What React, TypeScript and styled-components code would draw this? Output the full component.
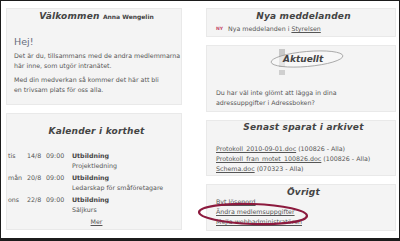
import styled, { createGlobalStyle } from "styled-components";

const Global = createGlobalStyle`
  html, body { margin: 0; padding: 0; background: #fff; }
  body { font-family: "DejaVu Sans", Verdana, sans-serif; color: #555; }
`;

const Frame = styled.div`
  width: 400px;
  height: 241px;
  box-sizing: border-box;
  border: 1px solid #1c1c1c;
  border-bottom-width: 3px;
  display: grid;
  grid-template-columns: 176px 190px;
  column-gap: 24px;
  align-items: start;
  padding: 7px 0 0 5px;
`;

const Column = styled.div`
  display: flex;
  flex-direction: column;
  gap: 8px;
`;

const Panel = styled.section<{ $h: number }>`
  position: relative;
  box-sizing: border-box;
  height: ${(p) => p.$h}px;
  background: #f4f4f4;
  border: 1px solid #e9e9e9;
  padding: 0 4px 0 9px;
  font-size: 6.3px;
  line-height: 10px;
  white-space: nowrap;
`;

const Title = styled.h2<{ $top?: number }>`
  margin: ${(p) => p.$top ?? 2}px 0 0;
  text-align: center;
  font-size: 9px;
  line-height: 12px;
  font-weight: bold;
  font-style: italic;
  color: #444;
  letter-spacing: 0.2px;
`;

const Who = styled.span`
  font-size: 6px;
  font-style: normal;
  letter-spacing: 0;
`;

const Hello = styled.div`
  margin: 13px 0 0 -2px;
  font-size: 9.5px;
  line-height: 12px;
  color: #676c7c;
`;

const Para = styled.p<{ $top: number }>`
  margin: ${(p) => p.$top}px 0 0 -2px;
`;

const CalTable = styled.table`
  margin: 14px 0 0 -8px;
  border-collapse: collapse;
  td {
    padding: 0;
    vertical-align: top;
  }
  td:nth-child(1) { width: 19px; }
  td:nth-child(2) { width: 19px; }
  td:nth-child(3) { width: 26px; }
  tr + tr td { padding-top: 2px; }
`;

const Strong = styled.b`
  color: #444;
`;

const More = styled.div`
  margin-top: 2px;
  text-align: center;
  a { color: #555; text-decoration: underline; }
`;

const Line = styled.div<{ $top?: number }>`
  margin-top: ${(p) => p.$top ?? 0}px;
  a { color: #555; text-decoration: underline; }
`;

const NewTag = styled.span`
  display: inline-block;
  width: 12px;
  font-size: 4.5px;
  font-weight: bold;
  color: #c44a6a;
  vertical-align: 1px;
`;

const Badge = styled.div`
  display: flex;
  justify-content: center;
  margin: 1px 0 0 6px;
  height: 31px;
`;

const Ring = styled.svg`
  position: absolute;
  left: -10px;
  top: 17px;
  overflow: visible;
`;

function Aktuellt() {
  return (
    <svg width="76" height="31" viewBox="0 0 76 31">
      <rect x="10" y="2" width="6" height="18" fill="#c9c9c9" />
      <rect x="10" y="23" width="6" height="5" fill="#cfcfcf" />
      <ellipse cx="38" cy="12" rx="36" ry="7.5" fill="rgba(250,250,250,0.55)" stroke="#9a9a9a" strokeWidth="0.8" transform="rotate(-5 38 12)" />
      <text x="14" y="15" fontFamily="DejaVu Sans, sans-serif" fontSize="9" fontWeight="bold" fontStyle="italic" fill="#444">Aktuellt</text>
    </svg>
  );
}

const events = [
  { d: "tis", date: "14/8", time: "09:00", what: "Projektledning" },
  { d: "mån", date: "20/8", time: "09:00", what: "Ledarskap för småföretagare" },
  { d: "ons", date: "22/8", time: "09:00", what: "Säljkurs" },
];

const files = [
  { name: "Protokoll_2010-09-01.doc", meta: "(100826 - Alla)" },
  { name: "Protokoll_fran_motet_100826.doc", meta: "(100826 - Alla)" },
  { name: "Schema.doc", meta: "(070323 - Alla)" },
];

export default function App() {
  return (
    <>
      <Global />
      <Frame>
        <Column>
          <Panel $h={97}>
            <Title $top={1}>
              Välkommen <Who>Anna Wengelin</Who>
            </Title>
            <Hello>Hej!</Hello>
            <Para $top={3}>
              Det är du, tillsammans med de andra medlemmarna
              <br />
              här inne, som utgör intranätet.
            </Para>
            <Para $top={4}>
              Med din medverkan så kommer det här att bli
              <br />
              en trivsam plats för oss alla.
            </Para>
          </Panel>
          <Panel $h={117}>
            <Title $top={11}>Kalender i korthet</Title>
            <CalTable>
              <tbody>
                {events.map((e) => (
                  <tr key={e.date}>
                    <td>{e.d}</td>
                    <td>{e.date}</td>
                    <td>{e.time}</td>
                    <td>
                      <Strong>Utbildning</Strong>
                      <br />
                      {e.what}
                    </td>
                  </tr>
                ))}
              </tbody>
            </CalTable>
            <More>
              <a>Mer</a>
            </More>
          </Panel>
        </Column>
        <Column>
          <Panel $h={29}>
            <Title $top={1}>Nya meddelanden</Title>
            <Line $top={2}>
              <NewTag>NY</NewTag>Nya meddelanden i <a>Styrelsen</a>
            </Line>
          </Panel>
          <Panel $h={67}>
            <Badge>
              <Aktuellt />
            </Badge>
            <Line $top={10}>Du har väl inte glömt att lägga in dina</Line>
            <Line>adressuppgifter i Adressboken?</Line>
          </Panel>
          <Panel $h={56}>
            <Title $top={0}>Senast sparat i arkivet</Title>
            <Line $top={11}>
              {files.map((f) => (
                <div key={f.name}>
                  <a>{f.name}</a> {f.meta}
                </div>
              ))}
            </Line>
          </Panel>
          <Panel $h={47}>
            <Title $top={1}>Övrigt</Title>
            <Line $top={-1}>
              <div><a>Byt lösenord</a></div>
              <div><a>Ändra medlemsuppgifter</a></div>
              <div><a>Mejla webbadministratören</a></div>
            </Line>
            <Ring width="112" height="24" viewBox="0 0 112 24">
              <ellipse cx="56" cy="12" rx="54" ry="10" fill="none" stroke="#8c1a3e" strokeWidth="2.2" transform="rotate(2 56 12)" />
            </Ring>
          </Panel>
        </Column>
      </Frame>
    </>
  );
}
